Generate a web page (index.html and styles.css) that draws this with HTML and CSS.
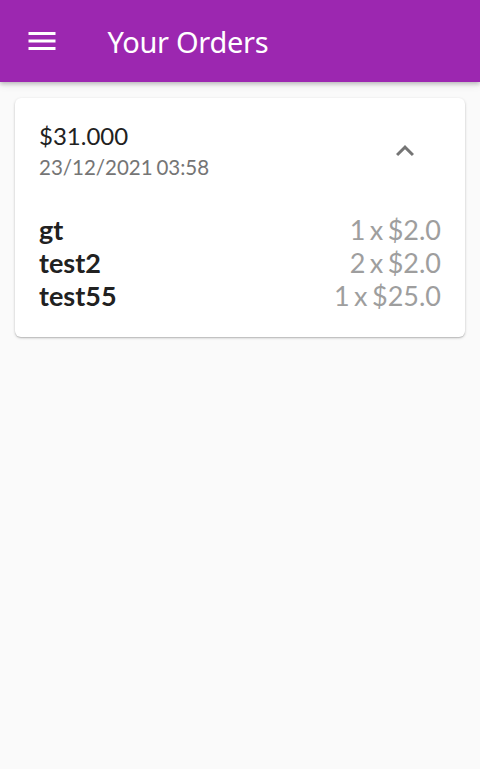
FILE: index.html
```html
<!DOCTYPE html>
<html lang="en">
<head>
<meta charset="utf-8">
<title>Your Orders</title>
<link rel="stylesheet" href="styles.css">
</head>
<body>
<header class="app-bar">
  <button class="icon-btn menu-btn" aria-label="Menu">
    <svg viewBox="0 0 24 24" width="36" height="36"><path fill="#fff" d="M3 18h18v-2H3v2zm0-5h18v-2H3v2zm0-7v2h18V6H3z"/></svg>
  </button>
  <h1 class="app-title">Your Orders</h1>
</header>
<main class="content">
  <section class="order-card">
    <div class="order-head">
      <div class="order-info">
        <div class="order-total">$31.000</div>
        <div class="order-date">23/12/2021 03:58</div>
      </div>
      <button class="icon-btn expand-btn" aria-label="Collapse">
        <svg viewBox="0 0 24 24" width="36" height="36"><path fill="#757575" d="M12 8l-6 6 1.41 1.41L12 10.83l4.59 4.58L18 14z"/></svg>
      </button>
    </div>
    <ul class="order-items">
      <li class="item"><span class="item-name">gt</span><span class="item-qty">1 x $2.0</span></li>
      <li class="item"><span class="item-name">test2</span><span class="item-qty">2 x $2.0</span></li>
      <li class="item"><span class="item-name">test55</span><span class="item-qty">1 x $25.0</span></li>
    </ul>
  </section>
</main>
</body>
</html>
```
FILE: styles.css
```css
* { box-sizing: border-box; }
html, body { margin: 0; padding: 0; }
body {
  background: #fafafa;
  font-family: Lato, "Open Sans", sans-serif;
  width: 480px;
  height: 769px;
  overflow: hidden;
}
.icon-btn {
  border: 0;
  background: none;
  padding: 0;
  margin: 0;
  display: flex;
  align-items: center;
  justify-content: center;
}
.icon-btn svg { display: block; }
.app-bar {
  height: 82px;
  background: #9c27b0;
  display: flex;
  align-items: center;
  box-shadow: 0 2px 4px rgba(0,0,0,0.22), 0 4px 8px rgba(0,0,0,0.06);
  position: relative;
  z-index: 1;
}
.menu-btn {
  width: 36px;
  height: 36px;
  margin-left: 23.5px;
}
.app-title {
  margin: 0 0 0 48px;
  font-family: "Noto Sans", "Open Sans", sans-serif;
  font-weight: 400;
  font-size: 29px;
  color: #fff;
  letter-spacing: -0.3px;
}
.content {
  padding: 16px 15px;
}
.order-card {
  background: #fff;
  border-radius: 6px;
  box-shadow: 0 1px 3px rgba(0,0,0,0.2), 0 1px 1px rgba(0,0,0,0.12);
}
.order-head {
  display: flex;
  align-items: center;
  justify-content: space-between;
  padding: 0 24px;
  height: 108px;
}
.order-info {
  display: flex;
  flex-direction: column;
  margin-top: -3px;
}
.order-total {
  font-size: 24px;
  color: #212121;
  line-height: 29px;
}
.order-date {
  font-size: 20.5px;
  color: #757575;
  line-height: 25px;
  margin-top: 5px;
  word-spacing: -1.5px;
}
.expand-btn {
  width: 72px;
  height: 72px;
  margin-top: -2px;
}
.order-items {
  list-style: none;
  margin: 0;
  padding: 7px 24px 25px 24px;
}
.item {
  display: flex;
  justify-content: space-between;
  align-items: baseline;
  font-size: 27px;
  line-height: 33px;
}
.item-name {
  font-weight: 700;
  color: #212121;
}
.item-qty {
  color: #9e9e9e;
  word-spacing: -2.5px;
}
```
